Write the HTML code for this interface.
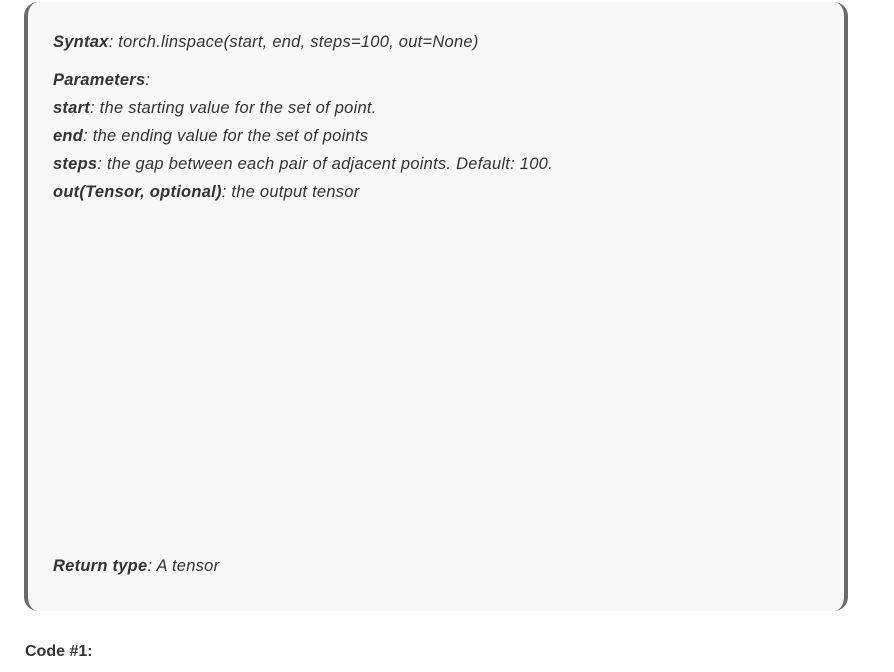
<!DOCTYPE html>
<html><head><meta charset="utf-8"><style>
html,body{margin:0;padding:0;background:#fff;width:894px;height:672px;overflow:hidden;}
body{font-family:"Liberation Sans",sans-serif;color:#333;}
.box{position:absolute;left:24px;top:2px;width:816px;height:609px;background:#f8f8f8;border-left:4px solid #6b6b6b;border-right:4px solid #6b6b6b;border-radius:14px;}
.t{position:absolute;left:53px;font-style:italic;font-size:16.5px;letter-spacing:0.25px;color:#333;white-space:nowrap;}
.t b{font-weight:bold;}
.code{position:absolute;left:25px;top:643px;font-weight:bold;font-size:16px;color:#333;}
</style></head><body>
<div class="box"></div>
<div class="t" style="top:33px"><b>Syntax</b>: torch.linspace(start, end, steps=100, out=None)</div>
<div class="t" style="top:71px"><b>Parameters</b>:</div>
<div class="t" style="top:99px"><b>start</b>: the starting value for the set of point.</div>
<div class="t" style="top:127px"><b>end</b>: the ending value for the set of points</div>
<div class="t" style="top:155px"><b>steps</b>: the gap between each pair of adjacent points. Default: 100.</div>
<div class="t" style="top:183px"><b>out(Tensor, optional)</b>: the output tensor</div>
<div class="t" style="top:557px"><b>Return type</b>: A tensor</div>
<div class="code">Code #1:</div>
</body></html>
